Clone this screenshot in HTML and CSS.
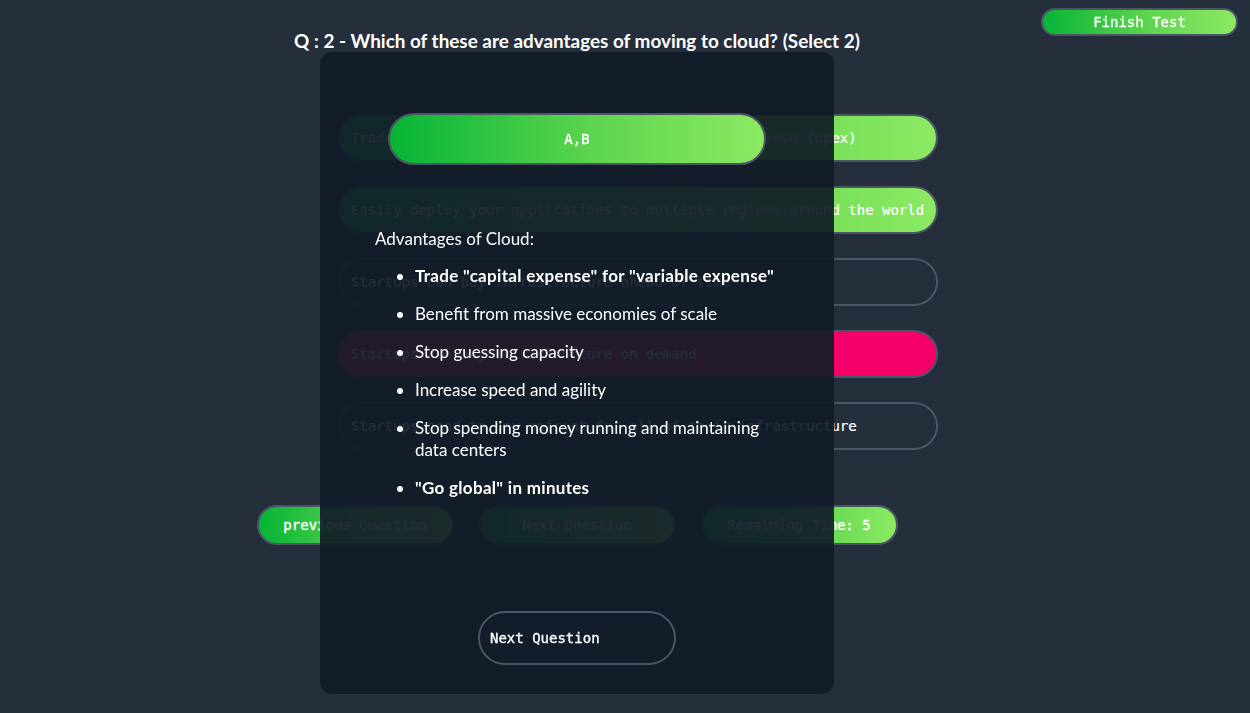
FILE: index.html
```html
<!DOCTYPE html>
<html lang="en">
<head>
<meta charset="utf-8">
<title>Quiz</title>
<link rel="stylesheet" href="styles.css">
</head>
<body>
<div class="topbar">
  <button class="btn btn-green finish">Finish Test</button>
</div>
<main class="quiz">
  <h1 class="question">Q : 2 - Which of these are advantages of moving to cloud? (Select 2)</h1>
  <div class="options">
    <div class="option option-correct">Trade capital expense (capex) for operational expense (opex)</div>
    <div class="option option-correct">Easily deploy your applications to multiple regions around the world</div>
    <div class="option">Startups can buy infrastructure ahead of time</div>
    <div class="option option-wrong">Startups can buy infrastructure on demand</div>
    <div class="option">Startups need to pay upfront for all of their infrastructure</div>
  </div>
  <div class="nav">
    <button class="btn btn-green nav-btn">previous Question</button>
    <button class="btn btn-green nav-btn">Next Question</button>
    <button class="btn btn-green nav-btn">Remaining Time: 5</button>
  </div>
</main>
<div class="modal">
  <div class="answer">A,B</div>
  <div class="explain">
    <p class="explain-title">Advantages of Cloud:</p>
    <ul class="explain-list">
      <li class="strong">Trade "capital expense" for "variable expense"</li>
      <li>Benefit from massive economies of scale</li>
      <li>Stop guessing capacity</li>
      <li>Increase speed and agility</li>
      <li>Stop spending money running and maintaining data centers</li>
      <li class="strong">"Go global" in minutes</li>
    </ul>
  </div>
  <button class="btn btn-outline modal-next">Next Question</button>
</div>
</body>
</html>
```
FILE: styles.css
```css
* { box-sizing: border-box; }

html, body {
  margin: 0;
  height: 100%;
}

body {
  background: #252f3c;
  color: #ffffff;
  font-family: "Lato", "Noto Sans", sans-serif;
  padding-top: 30px;
  overflow: hidden;
}

.topbar {
  position: fixed;
  top: 8px;
  right: 12px;
}

.btn {
  font-family: "DejaVu Sans Mono", "Liberation Mono", monospace;
  font-size: 14px;
  font-weight: 400;
  -webkit-text-stroke: 0.35px #ffffff;
  color: #ffffff;
  border: 2px solid #4b5563;
  cursor: pointer;
  padding: 0;
}

.btn-green {
  background: linear-gradient(90deg, #06b436 0%, #5ed54f 55%, #8ce962 100%);
}

.finish {
  width: 197px;
  height: 28px;
  border-radius: 14px;
}

.quiz {
  width: 1154px;
}

.question {
  margin: 0;
  font-size: 18.9px;
  line-height: 22px;
  font-weight: 700;
  text-align: center;
}

.options {
  width: 600px;
  margin: 62px 0 0 338px;
  display: flex;
  flex-direction: column;
  gap: 24px;
}

.option {
  height: 48px;
  border: 2px solid #4b5563;
  border-radius: 24px;
  padding: 0 11px;
  display: flex;
  align-items: center;
  font-family: "DejaVu Sans Mono", "Liberation Mono", monospace;
  font-size: 14px;
  -webkit-text-stroke: 0.2px #ffffff;
  white-space: nowrap;
  overflow: hidden;
}

.option-correct {
  background: linear-gradient(90deg, #06b436 0%, #5ed54f 55%, #8ce962 100%);
}

.option-wrong {
  background: #f5006a;
}

.nav {
  display: flex;
  justify-content: center;
  gap: 25px;
  margin-top: 55px;
}

.nav-btn {
  width: 197px;
  height: 40px;
  border-radius: 20px;
}

.modal {
  position: fixed;
  left: 320px;
  top: 52px;
  width: 514px;
  height: 642px;
  border-radius: 12px;
  background: rgba(18, 28, 40, 0.93);
  display: flex;
  flex-direction: column;
  align-items: center;
  padding: 61px 55px 29px;
}

.answer {
  width: 378px;
  height: 52px;
  border: 2px solid #4b5563;
  border-radius: 26px;
  background: linear-gradient(90deg, #06b436 0%, #5ed54f 55%, #8ce962 100%);
  display: flex;
  align-items: center;
  justify-content: center;
  font-family: "DejaVu Sans Mono", "Liberation Mono", monospace;
  font-size: 14px;
  font-weight: 400;
  -webkit-text-stroke: 0.45px #ffffff;
}

.explain {
  align-self: stretch;
  margin-top: 63px;
  font-size: 17px;
  line-height: 22px;
}

.explain-title {
  margin: 0;
}

.explain-list {
  margin: 15px 0 0;
  padding-left: 40px;
  max-width: 400px;
  display: flex;
  flex-direction: column;
  gap: 16px;
}

.explain-list .strong {
  font-weight: 700;
  letter-spacing: 0.3px;
}

.btn-outline {
  background: transparent;
}

.modal-next {
  margin-top: auto;
  width: 198px;
  height: 54px;
  border-radius: 27px;
  text-align: left;
  padding-left: 10px;
}
```
